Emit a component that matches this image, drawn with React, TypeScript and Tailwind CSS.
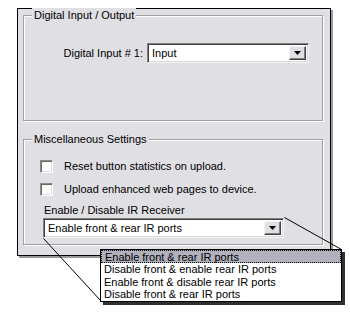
import React from "react";

const font = { fontFamily: '"Liberation Sans", Arial, sans-serif' };

function Combo({ text, width }: { text: string; width: string }) {
  return (
    <div
      className={`${width} h-[20px] flex items-stretch border border-t-[#808080] border-l-[#808080] border-b-[#f4f4f4] border-r-[#f4f4f4] bg-white shadow-[inset_1px_1px_0_#404040,inset_-1px_-1px_0_#d8d8d8]`}
    >
      <div className="flex-1 flex items-center pl-[4px] pt-[1px] text-[11px] leading-none text-black">{text}</div>
      <div className="w-[17px] my-[2px] mr-[2px] bg-[#e0dfe3] flex items-center justify-center border border-t-[#f4f4f4] border-l-[#f4f4f4] border-b-[#404040] border-r-[#404040] shadow-[inset_-1px_-1px_0_#808080]">
        <svg width="7" height="4" viewBox="0 0 7 4">
          <path d="M0 0h7L3.5 4z" fill="#000" />
        </svg>
      </div>
    </div>
  );
}

function GroupBox({ title, children, className }: { title: string; children: React.ReactNode; className?: string }) {
  return (
    <div
      className={`relative w-[300px] h-[106px] border border-[#a0a0a0] shadow-[inset_1px_1px_0_#fff,1px_1px_0_#fff] ${className ?? ""}`}
    >
      <div className="absolute left-[8px] top-[-8px] px-[2px] bg-[#e0dfe3] text-[11px] leading-[14px] text-black">{title}</div>
      {children}
    </div>
  );
}

function Check({ label }: { label: string }) {
  return (
    <div className="flex items-center h-[13px] gap-[11px]">
      <div className="w-[13px] h-[13px] bg-[#fbfbf8] border border-t-[#8a8a8a] border-l-[#8a8a8a] border-b-[#fff] border-r-[#fff] shadow-[inset_1px_1px_0_#6a6a6a,inset_-1px_-1px_0_#e0dfe3]" />
      <span className="text-[11px] leading-[13px] text-black">{label}</span>
    </div>
  );
}

export default function App() {
  const items = [
    "Enable front & rear IR ports",
    "Disable front & enable rear IR ports",
    "Enable front & disable rear IR ports",
    "Disable front & rear IR ports",
  ];
  return (
    <div className="relative w-[350px] h-[315px] bg-white overflow-hidden pt-[8px] pl-[17px]" style={font}>
      <div className="w-[314px] h-[248px] border border-black bg-[#e0dfe3] shadow-[2px_2px_0_#9a9a9a] pt-[6px] pl-[5px] flex flex-col">
        <GroupBox title="Digital Input / Output">
          <div className="pt-[27px] pr-[13px] flex items-center justify-end gap-[4px]">
            <span className="text-[11px] leading-none text-black">Digital Input # 1:</span>
            <Combo text="Input" width="w-[162px]" />
          </div>
        </GroupBox>
        <GroupBox title="Miscellaneous Settings" className="mt-[18px]">
          <div className="pt-[20px] pl-[16px] flex flex-col">
            <Check label="Reset button statistics on upload." />
            <div className="mt-[10px]">
              <Check label="Upload enhanced web pages to device." />
            </div>
            <div className="mt-[8px] h-[13px] leading-[13px] text-[11px] text-black pl-[4px]">Enable / Disable IR Receiver</div>
            <div className="mt-[1px] pl-[3px]">
              <Combo text="Enable front & rear IR ports" width="w-[241px]" />
            </div>
          </div>
        </GroupBox>
      </div>

      <svg className="absolute left-0 top-0 pointer-events-none" width="350" height="315">
        <line x1="43.5" y1="238.5" x2="100.5" y2="300.5" stroke="#000" strokeWidth="1" />
        <line x1="284.5" y1="217.5" x2="341.5" y2="249.5" stroke="#000" strokeWidth="1" />
      </svg>

      <div className="absolute left-[100px] top-[249px] w-[242px] h-[53px] border border-black bg-white shadow-[3px_3px_0_#303030] flex flex-col">
        {items.map((t, i) => (
          <div
            key={t}
            className={`h-[13px] leading-[12px] text-[11px] text-black pl-[3px] ${
              i === 0 ? "bg-[#b0b1bd] border border-dotted border-black pl-[2px]" : ""
            } ${i === 3 ? "h-[12px]" : ""}`}
          >
            {t}
          </div>
        ))}
      </div>
    </div>
  );
}
